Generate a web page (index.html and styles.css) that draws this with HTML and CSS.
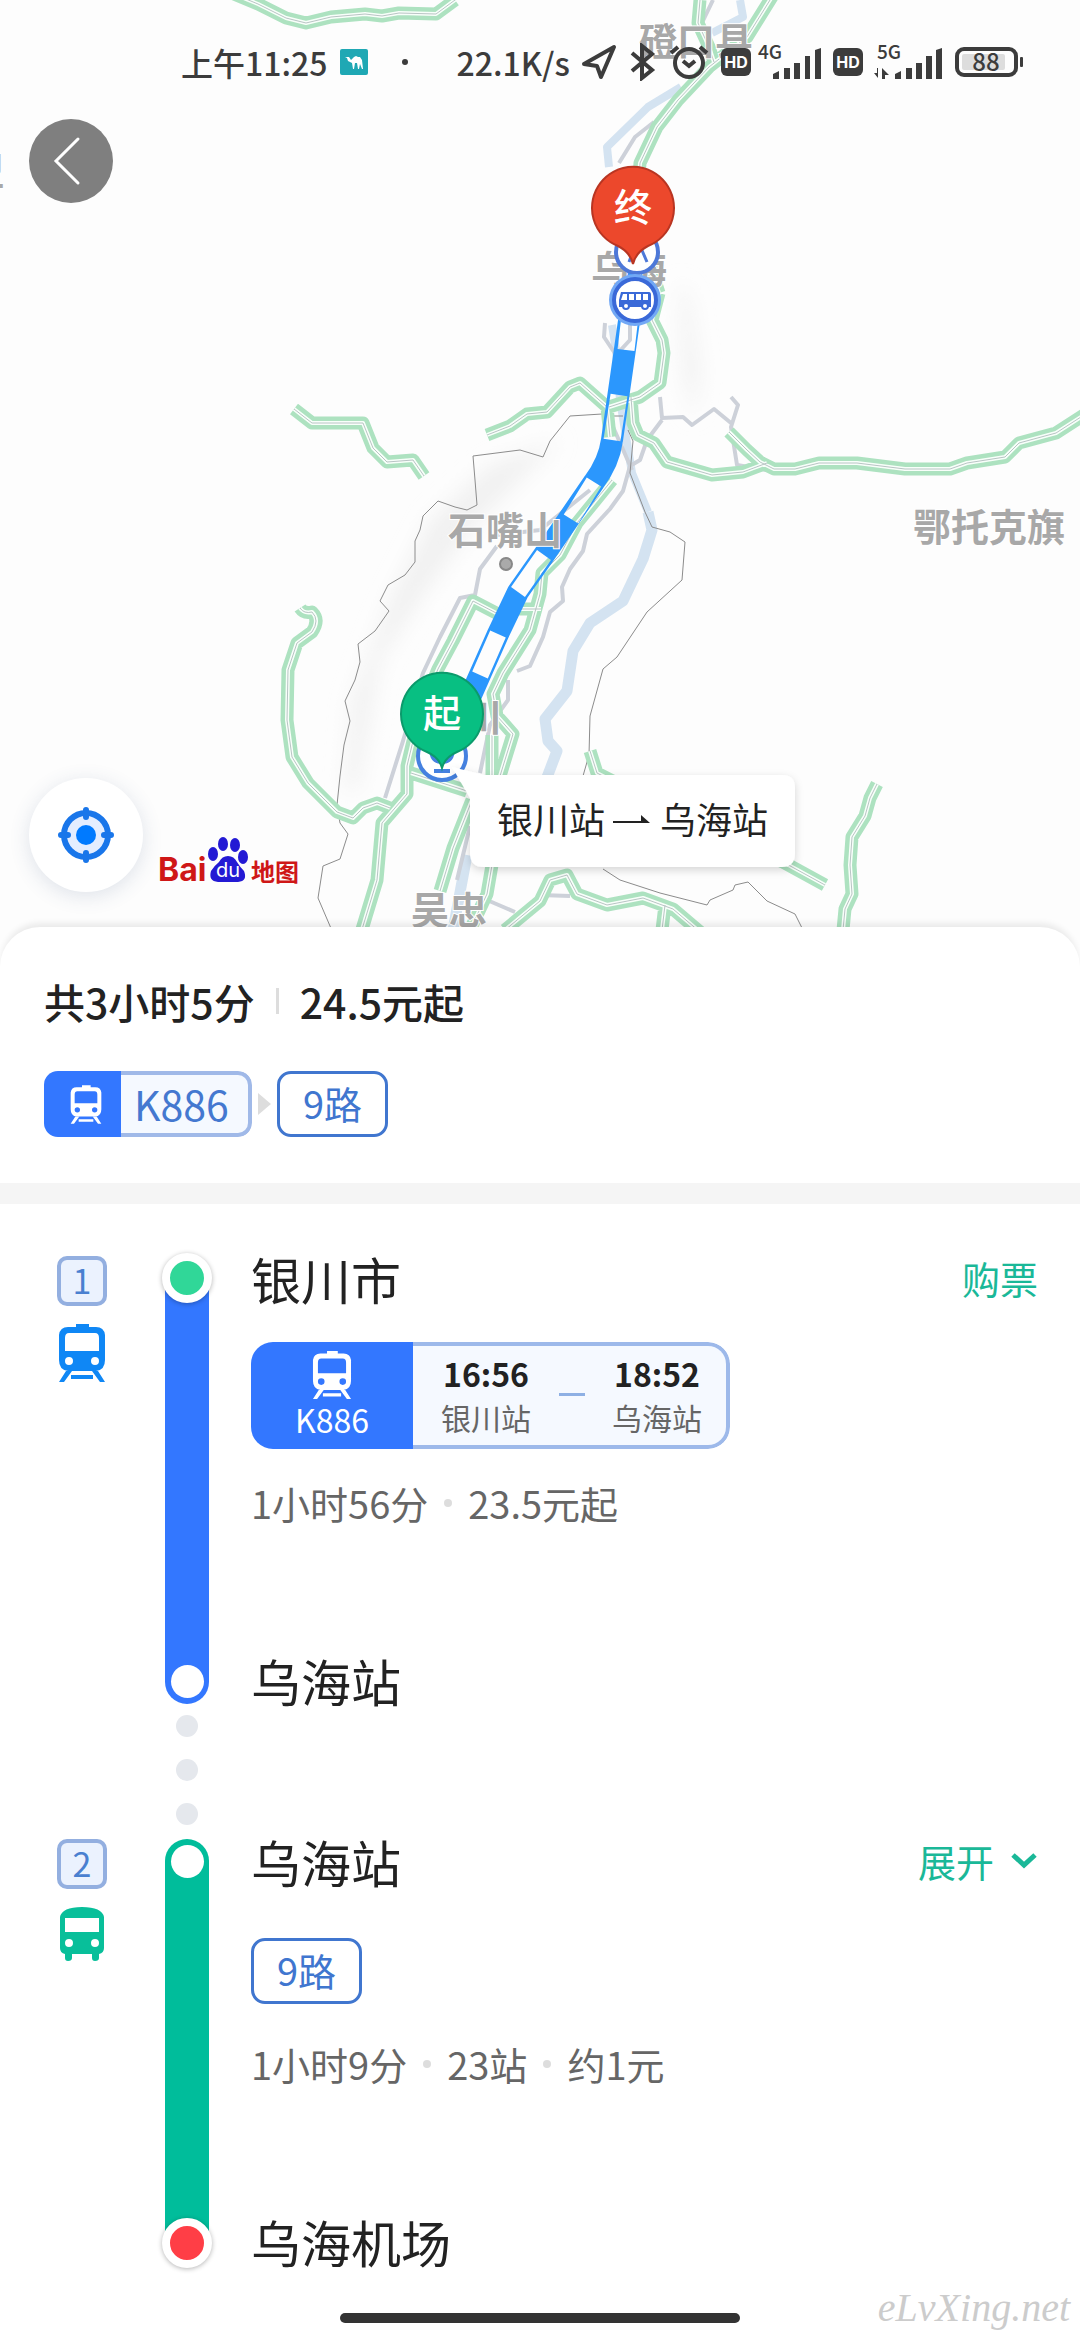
FILE: index.html
```html
<!DOCTYPE html>
<html lang="zh-CN">
<head>
<meta charset="utf-8">
<meta name="viewport" content="width=device-width, initial-scale=1">
<title>银川站 → 乌海站</title>
<link rel="stylesheet" href="styles.css">
</head>
<body>
<svg class="sprite" aria-hidden="true">
  <symbol id="train" viewBox="0 0 48 58">
    <path fill-rule="evenodd" d="M18 0H31V3H38Q46 3 47 11V36Q47 46 38 47H10Q1 46 1 36V11Q2 3 10 3H18ZM11 9Q7 9 7 14V27H41V14Q41 9 37 9ZM11 33A4 4 0 1 0 11 41A4 4 0 1 0 11 33ZM37 33A4 4 0 1 0 37 41A4 4 0 1 0 37 33Z"/>
    <path d="M8 47H14L6 58H1ZM34 47H40L47 58H42ZM13 51H35V55H13Z"/>
  </symbol>
  <symbol id="bus" viewBox="0 0 44 54">
    <path fill-rule="evenodd" d="M0 10Q2 0 22 0Q42 0 44 10V41Q44 46 39 47V51Q39 54 35 54Q32 54 32 51V47H12V51Q12 54 8 54Q5 54 5 51V47Q0 46 0 41ZM5 11V25H39V11ZM9 32A4 4 0 1 0 9 40A4 4 0 1 0 9 32ZM35 32A4 4 0 1 0 35 40A4 4 0 1 0 35 32Z"/>
  </symbol>
  <symbol id="hd" viewBox="0 0 30 28">
    <rect width="30" height="28" rx="6" fill="#3c3c3c"/>
    <text class="hd-text" x="15" y="20" text-anchor="middle">HD</text>
  </symbol>
</svg>

<section class="map" aria-label="地图">
  <svg class="map-canvas" viewBox="0 0 1080 966">
    <defs>
      <filter id="soft" x="-30%" y="-30%" width="160%" height="160%"><feGaussianBlur stdDeviation="10"/></filter>
      <filter id="shade" x="-10%" y="-20%" width="120%" height="150%"><feDropShadow dx="0" dy="3" stdDeviation="4" flood-opacity=".16"/></filter>
      <path id="roads" d="M234 -6L258 4L286 18L306 23L331 17L365 14L382 16L399 13L436 14L455 0
        M775 -8L747 37L709 67L678 100L657 127L640 163L636 220L659 293
        M700 0L698 23L709 47L714 62
        M659 293L652 320L662 340L664 353L660 383L640 397L609 407
        M487 435L510 426L527 414L547 412L570 387L580 383L607 407L610 437
        M631 397L633 423L638 435L654 443L667 462L712 475L743 472L767 463
        M729 432L747 450L760 462L774 469L795 469L819 463L857 463L905 469L950 469L967 463L1005 457L1019 443L1056 433L1084 415
        M294 409L312 423L363 423L373 448L387 462L413 460L424 476
        M300 608Q304 614 312 612Q320 620 312 632L297 643L288 670L287 720L292 757L308 783L337 812L353 818L363 808L377 803L390 808
        M360 936L377 880L382 823L407 794L407 766L413 741L425 700L438 669L453 641L473 601L500 615
        M519 609L541 609
        M612 480L577 523L560 555L542 573L540 594L530 630L503 673L493 694L497 716L513 734L500 776
        M492 735V778 M411 773L467 791 M472 800L453 848L440 891 M492 865L487 894L470 930
        M505 930L540 901L550 880L567 875L577 894L607 905L643 898L673 909L700 932 M665 905L662 930
        M590 751L597 773L640 795L783 862L825 885
        M877 784L870 798L865 816L852 837L850 865L852 894L845 909L843 930"/>
      <mask id="windows" maskUnits="userSpaceOnUse" x="400" y="280" width="280" height="500">
        <rect x="400" y="280" width="280" height="500" fill="#fff"/>
        <path d="M630 316L626 350M619 395L612 440M594 482L571 519M544 555L518 592M498 634L480 675" stroke="#000" stroke-width="17"/>
      </mask>
    </defs>
    <rect width="1080" height="966" fill="#fdfdfd"/>
    <g class="terrain" filter="url(#soft)">
      <path d="M560 440L520 480L470 530L420 600L380 660L358 790L345 790L352 700L390 600L430 520L490 465Z"/>
      <path d="M680 280L690 300L700 370L694 420L684 380Z"/>
    </g>
    <path class="river" d="M740 0L743 17L712 33M681 87L648 107L607 147L609 167M612 325L616 350L620 400L632 473L648 512"/>
    <path class="river river-wide" d="M648 512L652 530L643 559L623 601L590 623L573 651L567 691L545 719L548 741L557 751L546 780M467 855L453 930"/>
    <path class="lane" d="M713 0L700 27M654 122L635 137L619 163M605 323L604 337L616 355L630 340V320M660 397L662 418L683 417L692 425L714 409L731 423M731 397L738 405L731 427L737 465L767 470M662 420L647 440L640 460L630 466L623 491L610 509L587 534L583 551L570 569L562 587L563 601L550 612L543 637L530 666L517 671M610 420L632 470M497 546L480 569L475 595L460 598L440 637L423 673L403 741L385 798M508 680V700L490 725L480 773M470 826L457 880M487 900L515 912M540 895L570 896M497 535L540 530L590 490"/>
    <path class="border" d="M623 416H612L602 414L570 416L550 441L543 457L520 450L473 456L475 480L477 505L467 510L455 507L438 501L423 516L420 530L415 541L415 562L405 575L388 585L380 601L389 611L375 631L358 644L360 662L355 680L345 701L350 721L344 745L340 776L337 805L340 823L348 834L340 859L323 866L318 898L330 926L336 940M628 430L633 441L630 473L645 512L652 527L670 532L685 542L682 580L647 612L617 657L603 669L590 716L589 755L583 776M603 869L620 880L660 893L707 905L710 900L733 890L735 885L748 882L767 901L795 914L803 930"/>
    <use href="#roads" class="road-edge"/>
    <use href="#roads" class="road-core"/>
    <use href="#roads" class="road-line"/>
    <path class="route" mask="url(#windows)" d="M632 300L612 440Q609 462 594 482L544 555L518 592L498 634L471 695L442 756"/>
    <path class="route" d="M636 262L634 300"/>

    <g class="place">
      <text x="639" y="55">磴口县</text>
      <text x="591" y="283">乌海</text>
      <text x="448" y="544">石嘴山</text>
      <text x="913" y="541">鄂托克旗</text>
      <text x="464" y="731">川</text>
      <text x="411" y="924">吴忠</text>
      <text x="-34" y="185">盟</text>
    </g>
    <circle cx="506" cy="564" r="6" fill="#aaa" stroke="#888" stroke-width="2"/>

    <circle cx="637" cy="252" r="21" fill="#fff" stroke="#4d78d8" stroke-width="4"/>
    <path d="M641 248L647 262M629 262L632 254" stroke="#4d78d8" stroke-width="3"/>
    <circle cx="635" cy="300" r="26" fill="#72a8f5"/>
    <circle cx="635" cy="300" r="21" fill="#fff" stroke="#3a69d8" stroke-width="4"/>
    <path fill-rule="evenodd" fill="#3a69d8" d="M621 292H649Q651 292 651 295V307H619V300ZM623 294L621 300H627V294ZM629 294V300H634V294ZM636 294V300H641V294ZM643 294V300H648V294Z"/>
    <g fill="#fff" stroke="#3a69d8" stroke-width="2"><circle cx="626" cy="306" r="3"/><circle cx="645" cy="306" r="3"/></g>
    <circle cx="442" cy="756" r="24" fill="#fff" stroke="#4581e0" stroke-width="4"/>
    <path d="M431 748Q431 762 442 762Q453 762 453 748M434 771H450" fill="none" stroke="#4581e0" stroke-width="4"/>

    <path d="M633 264Q630 252 618 246A41 41 0 1 1 648 246Q636 252 633 264Z" fill="#ec482c" stroke="#b93522" stroke-width="2"/>
    <path d="M442 768Q439 757 427 752A41 41 0 1 1 457 752Q445 757 442 768Z" fill="#08bf82" stroke="#0b9a6b" stroke-width="2"/>
    <text class="pin-text" x="633" y="221">终</text>
    <text class="pin-text" x="442" y="727">起</text>

    <path d="M452 767L484 775H782Q795 775 795 788V853Q795 867 782 867H484Q470 867 470 853V798Z" fill="#fff" filter="url(#shade)"/>
    <g class="callout">
      <text x="497" y="834">银川站</text>
      <text x="660" y="834">乌海站</text>
    </g>
    <path d="M613 822H648" fill="none" stroke="#222" stroke-width="2"/>
    <path d="M650 823L641 815V823Z" fill="#222"/>

    <g class="baidu">
      <text class="baidu-red" x="158" y="881">Bai</text>
      <g fill="#2319d4">
        <ellipse cx="213" cy="854" rx="5" ry="7"/><ellipse cx="223" cy="844" rx="5" ry="7"/><ellipse cx="235" cy="845" rx="5" ry="7"/><ellipse cx="243" cy="857" rx="5" ry="7"/>
        <path d="M228 856Q234 856 237 862Q240 867 244 871Q248 881 238 882H218Q208 881 211 871Q214 866 219 862Q222 856 228 856Z"/>
      </g>
      <text class="baidu-du" x="228" y="877">du</text>
      <text class="baidu-cn" x="251" y="881">地图</text>
    </g>
  </svg>

  <header class="status">
    <span class="status-time">上午11:25</span>
    <svg width="28" height="26" viewBox="0 0 28 26"><rect width="28" height="26" rx="2" fill="#1fa8b4"/><path fill="#fff" d="M5 8L9 8L11 11L14 8L16 7L18 8L20 8L22 11L23 20H22L20 15L19 20H18L17 14H15L14 20H13L12 14L8 12L7 9Z"/></svg>
    <span class="status-dot"></span>
    <span class="status-speed">22.1K/s</span>
    <span class="status-icons">
      <svg width="36" height="36" viewBox="0 0 36 36"><path d="M3 20L33 3L20 33L16 22Z" fill="none" stroke="#3c3c3c" stroke-width="4" stroke-linejoin="round"/></svg>
      <svg width="28" height="38" viewBox="0 0 28 38"><path d="M3 10L23 27L13 35V3L23 11L3 28" fill="none" stroke="#3c3c3c" stroke-width="4"/></svg>
      <svg width="40" height="38" viewBox="0 0 40 38"><circle cx="20" cy="20" r="14" fill="none" stroke="#3c3c3c" stroke-width="4"/><path d="M14 18L20 23L26 18M2 10L9 4M38 10L31 4" fill="none" stroke="#3c3c3c" stroke-width="4"/></svg>
      <span class="status-sim">
        <svg width="30" height="28"><use href="#hd"/></svg>
        <svg width="64" height="38" viewBox="0 0 64 38"><text class="net" x="1" y="16">4G</text><path d="M16 36V31L22 28V36ZM27 36V25H33V36ZM37 36V20H43V36ZM48 36V13H53V36ZM58 36V7L64 5V36Z" fill="#3c3c3c"/></svg>
      </span>
      <span class="status-sim">
        <svg width="30" height="28"><use href="#hd"/></svg>
        <svg width="74" height="38" viewBox="0 0 74 38"><text class="net" x="8" y="16">5G</text><path d="M26 36V31L32 28V36ZM37 36V25H43V36ZM47 36V20H53V36ZM57 36V13H63V36ZM67 36V7L73 5V36ZM9 25V35L5 30H8V25ZM13 36V25L20 32H16V36Z" fill="#3c3c3c"/></svg>
      </span>
      <svg width="70" height="30" viewBox="0 0 70 30"><rect x="2" y="2" width="59" height="26" rx="7" fill="none" stroke="#3c3c3c" stroke-width="4"/><rect x="7" y="7" width="43" height="16" rx="2" fill="#ddd"/><rect x="65" y="10" width="3" height="10" rx="1" fill="#3c3c3c"/><text class="battery" x="31" y="24" text-anchor="middle">88</text></svg>
    </span>
  </header>

  <button class="back" type="button" aria-label="返回">
    <svg width="84" height="84" viewBox="0 0 84 84"><path d="M49 20L27 42L49 64" fill="none" stroke="#fff" stroke-width="3" stroke-linecap="round"/></svg>
  </button>
  <button class="locate" type="button" aria-label="定位">
    <svg width="60" height="60" viewBox="0 0 60 60"><circle cx="30" cy="30" r="22" fill="#e3edff" stroke="#1976ea" stroke-width="6"/><path d="M30 5V12M30 48V55M5 30H12M48 30H55" stroke="#1976ea" stroke-width="6" stroke-linecap="round"/><circle cx="30" cy="30" r="10" fill="#007aff"/></svg>
  </button>
</section>

<main class="sheet">
  <section class="summary">
    <h1 class="summary-title"><span>共3小时5分</span><span class="summary-rule"></span><span>24.5元起</span></h1>
    <div class="lines">
      <span class="line-train"><span class="line-icon"><svg width="32" height="39"><use href="#train"/></svg></span><span class="line-name">K886</span></span>
      <span class="lines-arrow"></span>
      <span class="line-bus">9路</span>
    </div>
  </section>

  <ol class="steps">
    <li class="step">
      <div class="step-mode step-mode-train"><span class="step-number">1</span><svg width="48" height="58"><use href="#train"/></svg></div>
      <div class="rail rail-train"><span class="stop-end stop-from"></span><span class="stop"></span></div>
      <div class="step-body">
        <div class="step-head"><h2 class="place-name">银川市</h2><a class="action" href="#buy">购票</a></div>
        <div class="ticket">
          <div class="ticket-train"><svg width="40" height="48"><use href="#train"/></svg><span>K886</span></div>
          <div class="ticket-times">
            <div class="ticket-stop"><strong>16:56</strong><span>银川站</span></div>
            <span class="ticket-dash"></span>
            <div class="ticket-stop"><strong>18:52</strong><span>乌海站</span></div>
          </div>
        </div>
        <p class="meta meta-train"><span>1小时56分</span><i></i><span>23.5元起</span></p>
        <h2 class="place-name place-last">乌海站</h2>
      </div>
    </li>
    <li class="transfer"><i></i><i></i><i></i></li>
    <li class="step">
      <div class="step-mode step-mode-bus"><span class="step-number">2</span><svg width="44" height="54"><use href="#bus"/></svg></div>
      <div class="rail rail-bus"><span class="stop"></span><span class="stop-end stop-to"></span></div>
      <div class="step-body">
        <div class="step-head"><h2 class="place-name">乌海站</h2><button class="action" type="button">展开<svg width="28" height="20" viewBox="0 0 28 20"><path d="M3 4L14 14L25 4" fill="none" stroke="#1ab898" stroke-width="5"/></svg></button></div>
        <div class="bus-row"><span class="line-bus">9路</span></div>
        <p class="meta meta-bus"><span>1小时9分</span><i></i><span>23站</span><i></i><span>约1元</span></p>
        <h2 class="place-name place-last">乌海机场</h2>
      </div>
    </li>
  </ol>
</main>

<footer class="footer">
  <span class="home-bar"></span>
  <span class="watermark">eLvXing.net</span>
</footer>
</body>
</html>
```
FILE: styles.css
```css
* { box-sizing: border-box; }
body, h1, h2, p, ol { margin: 0; padding: 0; }
body {
  background: #fff;
  color: #222;
  font-family: "Noto Sans CJK SC", "Noto Sans", sans-serif;
}
svg { display: block; flex: none; }
button { border: 0; padding: 0; background: none; font: inherit; cursor: pointer; }
ol { list-style: none; }
h1, h2 { font-weight: 400; }
.sprite { position: absolute; width: 0; height: 0; }

/* Map */
.map { position: relative; overflow: hidden; }
.map-canvas { width: 100%; height: auto; }
.terrain { fill: #f1f1f1; }
.river, .lane, .border, .route, .road-edge, .road-core, .road-line { fill: none; stroke-linejoin: round; }
.river { stroke: #d4e3f1; stroke-width: 8; }
.river-wide { stroke-width: 11; }
.lane { stroke: #cdd1d9; stroke-width: 4; }
.border { stroke: #8c8c8c; stroke-width: 1; }
.road-edge { stroke: #ade2c0; stroke-width: 13; }
.road-core { stroke: #f8fffa; stroke-width: 4; }
.road-line { stroke: #b9c4c4; stroke-width: 1; }
.route { stroke: #2b97fd; stroke-width: 22; }
.place { font-size: 38px; font-weight: 700; fill: #a8a8a8; stroke: #fff; stroke-width: 2px; paint-order: stroke; }
.pin-text { font-size: 38px; font-weight: 500; fill: #fff; text-anchor: middle; }
.callout { font-size: 36px; fill: #222; }
.baidu-red { font-family: Inter, sans-serif; font-size: 32px; font-weight: 700; fill: #cf1717; }
.baidu-cn { font-size: 24px; font-weight: 700; fill: #cf1717; }
.baidu-du { font-family: Inter, sans-serif; font-size: 20px; fill: #fff; text-anchor: middle; }

/* Status bar */
.status {
  position: absolute;
  top: 40px;
  left: 0;
  right: 0;
  height: 44px;
  padding-left: 181px;
  display: flex;
  align-items: center;
  color: #3c3c3c;
  font-size: 32px;
  font-weight: 500;
  line-height: 44px;
}
.status-time { margin-right: 12px; }
.status-dot { width: 6px; height: 6px; margin: 0 49px 0 34px; border-radius: 50%; background: #3c3c3c; }
.status-speed { width: 124px; }
.status-icons, .status-sim { display: flex; align-items: center; }
.status-icons { gap: 12px; }
.status-sim { gap: 6px; }
.hd-text { font-family: Inter, sans-serif; font-size: 16px; font-weight: 700; fill: #fff; }
.net { font-size: 19px; fill: #3c3c3c; }
.battery { font-size: 24px; fill: #3c3c3c; }

.back, .locate { position: absolute; border-radius: 50%; }
.back { top: 119px; left: 29px; width: 84px; height: 84px; background: #7f7f7f; }
.locate {
  bottom: 74px;
  left: 29px;
  width: 114px;
  height: 114px;
  display: grid;
  place-items: center;
  background: #fff;
  box-shadow: 0 4px 20px rgba(60, 90, 130, .16);
}

/* Sheet */
.sheet {
  position: relative;
  margin-top: -39px;
  border-radius: 40px 40px 0 0;
  background: #fff;
  box-shadow: 0 -6px 6px -2px rgba(0, 0, 0, .08);
}
.summary { padding: 53px 44px 46px; border-bottom: 21px solid #f5f5f5; }
.summary-title {
  display: flex;
  align-items: center;
  gap: 21px;
  font-size: 41px;
  font-weight: 500;
  line-height: 42px;
}
.summary-rule { width: 3px; height: 26px; background: #ddd; }
.lines { display: flex; align-items: center; margin-top: 49px; }
.line-train {
  display: flex;
  height: 66px;
  border-radius: 14px;
  overflow: hidden;
}
.line-icon { display: grid; place-items: center; width: 77px; padding-left: 6px; background: #3377ff; color: #fff; fill: currentColor; }
.line-name {
  width: 131px;
  padding-right: 6px;
  border: 4px solid #a0b9e8;
  border-left: 0;
  border-radius: 0 14px 14px 0;
  background: #f5f9ff;
  color: #4478d0;
  font-size: 41px;
  line-height: 56px;
  text-align: center;
}
.lines-arrow { margin: 0 6px; border: 11px solid transparent; border-left: 13px solid #ddd; border-right: 0; }
.line-bus {
  display: inline-block;
  width: 111px;
  height: 66px;
  border: 3px solid #4076cf;
  border-radius: 14px;
  color: #4076cf;
  font-size: 38px;
  line-height: 58px;
  text-align: center;
}

/* Itinerary */
.steps { padding: 52px 42px 0 57px; }
.step { display: grid; grid-template-columns: 108px 44px 1fr; }
.step-mode { display: flex; flex-direction: column; align-items: center; gap: 18px; width: 50px; }
.step-mode-train { fill: #0f87f5; }
.step-mode-bus { fill: #08bf9a; }
.step-number {
  width: 50px;
  height: 50px;
  border: 4px solid #93afe0;
  border-radius: 10px;
  background: #ebf2fe;
  color: #4a80d0;
  font-size: 34px;
  line-height: 40px;
  text-align: center;
}
.rail {
  display: flex;
  flex-direction: column;
  align-items: center;
  justify-content: space-between;
  padding: 6px 0;
  border-radius: 22px;
}
.rail-train { background: #3377ff; }
.rail-bus { background: #00bd9b; }
.stop { width: 33px; height: 33px; border-radius: 50%; background: #fff; }
.stop-end {
  width: 50px;
  height: 50px;
  margin: -9px 0;
  border: 8px solid #fff;
  border-radius: 50%;
  box-shadow: 0 1px 5px rgba(0, 0, 0, .3);
}
.stop-from { background: #30d798; }
.stop-to { background: #ff3e46; }
.step-body { padding: 0 0 2px 42px; }
.step-head { display: flex; justify-content: space-between; align-items: center; }
.place-name { font-size: 50px; line-height: 44px; }
.place-last { margin-top: 136px; }
.action {
  display: flex;
  align-items: center;
  gap: 16px;
  color: #1ab898;
  font-size: 38px;
  line-height: 42px;
  text-decoration: none;
}
.ticket {
  display: flex;
  width: 479px;
  height: 107px;
  margin-top: 42px;
  border-radius: 22px;
  overflow: hidden;
}
.ticket-train {
  display: flex;
  flex-direction: column;
  align-items: center;
  width: 162px;
  padding-top: 9px;
  background: #3377ff;
  color: #fff;
  fill: #fff;
  font-size: 32px;
  line-height: 40px;
}
.ticket-times {
  flex: 1;
  display: flex;
  align-items: center;
  justify-content: space-between;
  padding: 0 24px 2px 28px;
  border: 4px solid #9db9ea;
  border-left: 0;
  border-radius: 0 22px 22px 0;
  background: #f5f9ff;
}
.ticket-stop { display: grid; justify-items: center; line-height: 44px; font-size: 30px; color: #666; }
.ticket-stop strong { color: #222; font-size: 32px; font-weight: 700; }
.ticket-dash { width: 26px; height: 3px; background: #8eb0e4; }
.meta { display: flex; align-items: center; gap: 16px; color: #666; font-size: 38px; line-height: 38px; }
.meta i { width: 8px; height: 8px; border-radius: 50%; background: #ddd; }
.meta-train { margin-top: 35px; }
.bus-row { display: flex; margin-top: 55px; }
.meta-bus { margin-top: 41px; }
.transfer {
  display: flex;
  flex-direction: column;
  align-items: center;
  gap: 22px;
  width: 44px;
  margin-left: 108px;
  padding: 11px 0 14px;
}
.transfer i { width: 22px; height: 22px; border-radius: 50%; background: #e5e8ed; }

.footer {
  display: grid;
  grid-template-columns: 1fr 400px 1fr;
  align-items: end;
  padding: 21px 10px 10px;
}
.home-bar { grid-column: 2; height: 10px; margin-bottom: 7px; border-radius: 5px; background: #333; }
.watermark {
  justify-self: end;
  color: #ccc;
  font-family: "Liberation Serif", serif;
  font-size: 40px;
  font-style: italic;
  line-height: 44px;
}
```
